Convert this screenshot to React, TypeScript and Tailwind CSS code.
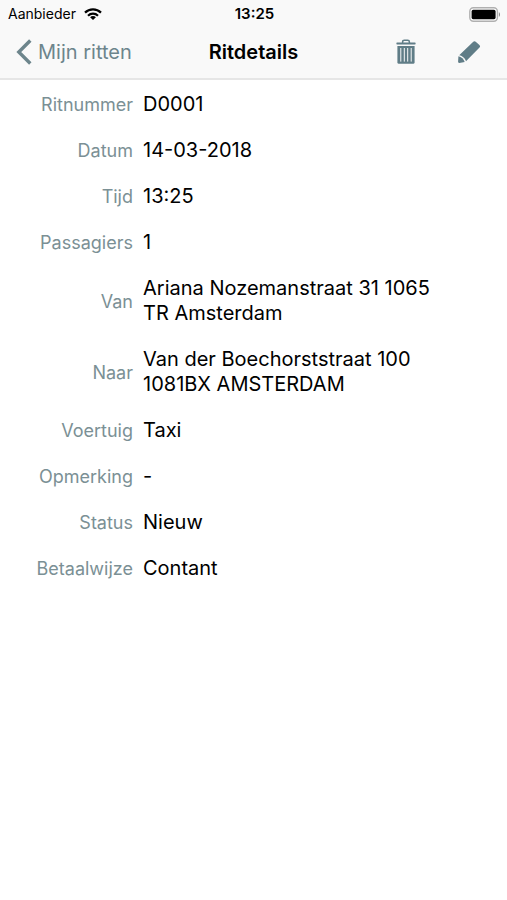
const rows = [
  { label: "Ritnummer", value: "D0001" },
  { label: "Datum", value: "14-03-2018" },
  { label: "Tijd", value: "13:25" },
  { label: "Passagiers", value: "1" },
  { label: "Van", value: "Ariana Nozemanstraat 31 1065 TR Amsterdam" },
  { label: "Naar", value: "Van der Boechorststraat 100 1081BX AMSTERDAM" },
  { label: "Voertuig", value: "Taxi" },
  { label: "Opmerking", value: "-" },
  { label: "Status", value: "Nieuw" },
  { label: "Betaalwijze", value: "Contant" },
];

const WifiIcon = () => (
  <svg className="h-3 w-[18px]" viewBox="0 0 18 12" fill="none" stroke="#000" strokeWidth="2.2">
    <path d="M1 4.6C5.4 0.2 12.6 0.2 17 4.6" />
    <path d="M4 7.7C6.8 5 11.2 5 14 7.7" />
    <path d="M9 12L6.1 9.2C7.7 7.7 10.3 7.7 11.9 9.2Z" fill="#000" stroke="none" />
  </svg>
);

const BatteryIcon = () => (
  <svg className="h-[15px] w-8" viewBox="0 0 32 15">
    <rect x="0.8" y="0.8" width="27.6" height="13.4" rx="3.6" fill="#fff" stroke="#b0b0b0" strokeWidth="1.4" />
    <rect x="2.6" y="2.8" width="24" height="9.4" rx="1.6" fill="#000" />
    <path d="M29.9 5.2C31.4 5.8 31.4 9.2 29.9 9.8Z" fill="#8e8e8e" />
  </svg>
);

const BackIcon = () => (
  <svg className="h-[26px] w-4" viewBox="0 0 16 26" fill="none" stroke="currentColor" strokeWidth="3.4">
    <path d="M14.3 1.5L2.8 13L14.3 24.5" />
  </svg>
);

const TrashIcon = () => (
  <svg className="h-[26px] w-5" viewBox="0 0 20 26" fill="none">
    <path d="M6.6 4V2.9C6.6 1.8 7.2 1.2 8.3 1.2H11.7C12.8 1.2 13.4 1.8 13.4 2.9V4" stroke="currentColor" strokeWidth="1.5" />
    <rect x="0.4" y="3.4" width="19.2" height="2" rx="0.6" fill="currentColor" />
    <path d="M1.4 7H18.6V23.6C18.6 24.3 18.2 24.8 17.5 24.8H2.5C1.8 24.8 1.4 24.3 1.4 23.6Z" fill="currentColor" />
    <path d="M4.8 9V22.6M8.3 9V22.6M11.7 9V22.6M15.2 9V22.6" stroke="#f9f9f9" strokeWidth="1" />
  </svg>
);

const PencilIcon = () => (
  <svg className="h-6 w-6" viewBox="0 0 24 24" fill="currentColor">
    <path d="M16 2C16.9 1.2 18 1.1 19 1.9L22.4 4.9C23.3 5.7 23.3 6.8 22.5 7.6L9 21.2C8.2 18.4 5.6 15.7 2.2 15.2Z" />
    <path d="M1.4 16.2C4.4 16.8 6.8 19 7.7 21.9L2.4 22.9C1.6 23 1.1 22.6 1.1 21.8Z" />
  </svg>
);

export default function App() {
  return (
    <div className="min-h-screen bg-white font-['Inter','Liberation_Sans',sans-serif] text-black">
      <header className="border-b-2 border-[#e6e6e6] bg-[#f9f9f9] pb-0.5">
        <div className="grid h-7 grid-cols-[1fr_auto_1fr] items-center pr-1.5 pl-2 text-sm">
          <div className="flex items-center gap-2">
            <span>Aanbieder</span>
            <WifiIcon />
          </div>
          <time className="text-[15px] font-semibold">13:25</time>
          <div className="flex justify-end">
            <BatteryIcon />
          </div>
        </div>
        <nav className="grid h-12 grid-cols-[1fr_auto_1fr] items-center px-4 text-xl">
          <a href="#ritten" className="flex items-center gap-1.5 text-[#6d858c]">
            <BackIcon />
            Mijn ritten
          </a>
          <h1 className="font-semibold">Ritdetails</h1>
          <div className="flex items-center justify-end gap-[41px] pr-2.5 text-[#607d87]">
            <button type="button" aria-label="Verwijderen">
              <TrashIcon />
            </button>
            <button type="button" aria-label="Bewerken">
              <PencilIcon />
            </button>
          </div>
        </nav>
      </header>

      <dl className="flex flex-col gap-[21px] py-3 pr-16">
        {rows.map((row) => (
          <div key={row.label} className="grid grid-cols-[133px_1fr] items-center gap-2.5">
            <dt className="text-right text-lg leading-[25px] text-[#7b9095]">{row.label}</dt>
            <dd className="text-xl leading-[25px]">{row.value}</dd>
          </div>
        ))}
      </dl>
    </div>
  );
}
